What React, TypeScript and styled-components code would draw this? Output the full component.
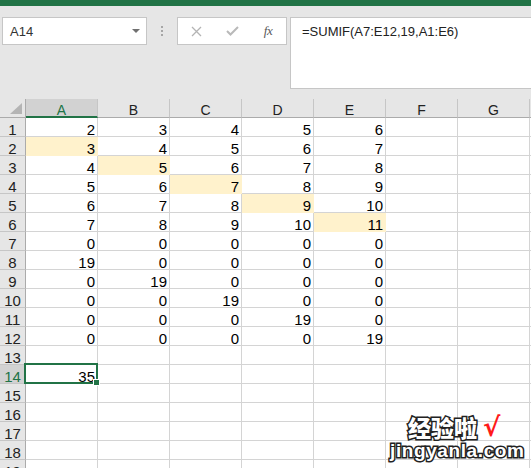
import styled, { createGlobalStyle, css } from 'styled-components';
import React from 'react';

const GlobalStyle = createGlobalStyle`
    html, body {
        margin: 0;
        padding: 0;
        background: #e6e6e6;
        overflow: hidden;
    }
`

const GREEN = '#217346';
const FILL = '#fff2cc';

const Page = styled.div`
    position: relative;
    width: 531px;
    height: 468px;
    overflow: hidden;
    background: #e6e6e6;
    font-family: "Liberation Sans", Arial, sans-serif;
`

const TopStrip = styled.div`
    height: 6px;
    background: ${GREEN};
`

const Toolbar = styled.div`
    display: flex;
    align-items: flex-start;
    height: 93px;
    box-sizing: border-box;
    padding: 11px 0 0 2px;
`

const NameBox = styled.div`
    display: flex;
    align-items: center;
    justify-content: space-between;
    width: 145px;
    height: 28px;
    box-sizing: border-box;
    padding: 0 6px 0 7px;
    background: #fff;
    border: 1px solid #c6c6c6;
    font-size: 13px;
    color: #333;
`

const DropArrow = styled.span`
    width: 0;
    height: 0;
    border-left: 4px solid transparent;
    border-right: 4px solid transparent;
    border-top: 4px solid #707070;
`

const Grip = styled.div`
    display: flex;
    flex-direction: column;
    align-items: center;
    gap: 2px;
    width: 30px;
    padding-top: 9px;

    span {
        width: 2px;
        height: 2px;
        background: #a6a6a6;
    }
`

const FnBox = styled.div`
    display: flex;
    align-items: center;
    width: 110px;
    height: 28px;
    box-sizing: border-box;
    background: #fff;
    border: 1px solid #c6c6c6;
`

const FnButton = styled.span`
    display: flex;
    align-items: center;
    justify-content: center;
    width: 36px;
    height: 100%;
`

const Fx = styled.span`
    font-family: "Liberation Serif", "Times New Roman", serif;
    font-style: italic;
    font-size: 13px;
    color: #595959;
    letter-spacing: -0.5px;
`

const FormulaBar = styled.div`
    flex: 1;
    margin-left: 3px;
    height: 72px;
    box-sizing: border-box;
    padding: 6px 0 0 11px;
    background: #fff;
    border: 1px solid #c6c6c6;
    border-right: none;
    font-size: 13px;
    color: #222;
`

const Sheet = styled.div`
    display: grid;
    grid-template-columns: 26px repeat(8, 72px);
    grid-auto-rows: 19px;
    background: #fff;
`

const Corner = styled.div`
    display: flex;
    align-items: flex-end;
    justify-content: flex-end;
    padding: 0 3px 3px 0;
    box-sizing: border-box;
    background: #e6e6e6;
    border-right: 1px solid #ababab;
    border-bottom: 1px solid #ababab;
`

const ColHead = styled.div<{ $active?: boolean }>`
    box-sizing: border-box;
    text-align: center;
    font-size: 14px;
    line-height: 22px;
    overflow: hidden;
    color: #222;
    background: #e6e6e6;
    border-right: 1px solid #c6c6c6;
    border-bottom: 1px solid #ababab;
    ${p => p.$active && css`
        background: #d2d2d2;
        color: ${GREEN};
        border-bottom: 2px solid ${GREEN};
    `}
`

const RowHead = styled.div<{ $active?: boolean }>`
    box-sizing: border-box;
    text-align: center;
    font-size: 15px;
    line-height: 24px;
    overflow: hidden;
    color: #222;
    background: #e6e6e6;
    border-right: 1px solid #ababab;
    border-bottom: 1px solid #c6c6c6;
    ${p => p.$active && css`
        background: #d2d2d2;
        color: ${GREEN};
    `}
`

const Cell = styled.div<{ $fill?: boolean; $selected?: boolean }>`
    position: relative;
    box-sizing: border-box;
    text-align: right;
    padding-right: 2px;
    font-size: 15px;
    line-height: 24px;
    color: #000;
    background: ${p => (p.$fill ? FILL : '#fff')};
    border-right: 1px solid ${p => (p.$fill ? FILL : '#d4d4d4')};
    border-bottom: 1px solid ${p => (p.$fill ? FILL : '#d4d4d4')};
    ${p => p.$selected && css`
        overflow: visible;
        &::after {
            content: '';
            position: absolute;
            left: -2px;
            top: -2px;
            right: -1px;
            bottom: -1px;
            border: 2px solid ${GREEN};
            pointer-events: none;
        }
        &::before {
            content: '';
            position: absolute;
            right: -3px;
            bottom: -3px;
            width: 5px;
            height: 5px;
            background: ${GREEN};
            border: 1px solid #fff;
            z-index: 2;
        }
    `}
`

const Watermark = styled.div`
    position: absolute;
    left: 390px;
    top: 414px;
    display: flex;
    flex-direction: column;
    align-items: flex-start;
    pointer-events: none;
`

const WatermarkTitle = styled.div`
    display: flex;
    align-items: center;
    gap: 6px;
    padding-left: 18px;
    font-family: "Noto Sans CJK SC", sans-serif;
    font-weight: 900;
    font-size: 23px;
    line-height: 27px;
    color: #fff;
    -webkit-text-stroke: 3px #222;
    paint-order: stroke fill;
`

const Tick = styled.span`
    font-family: "DejaVu Sans", sans-serif;
    font-size: 26px;
    font-weight: 700;
    color: #ff1a1a;
    -webkit-text-stroke: 0;
`

const WatermarkUrl = styled.div`
    font-family: "Liberation Sans", Arial, sans-serif;
    font-weight: 700;
    font-size: 19px;
    line-height: 20px;
    letter-spacing: 0.6px;
    color: #fff;
    -webkit-text-stroke: 3px #222;
    paint-order: stroke fill;
`

const columns = ['A', 'B', 'C', 'D', 'E', 'F', 'G', ''];

const data: (number | null)[][] = [
    [2, 3, 4, 5, 6],
    [3, 4, 5, 6, 7],
    [4, 5, 6, 7, 8],
    [5, 6, 7, 8, 9],
    [6, 7, 8, 9, 10],
    [7, 8, 9, 10, 11],
    [0, 0, 0, 0, 0],
    [19, 0, 0, 0, 0],
    [0, 19, 0, 0, 0],
    [0, 0, 19, 0, 0],
    [0, 0, 0, 19, 0],
    [0, 0, 0, 0, 19],
    [],
    [35],
    [],
    [],
    [],
    [],
    [],
];

const App = () => {
    return <Page>
        <GlobalStyle />
        <TopStrip />
        <Toolbar>
            <NameBox>
                <span>A14</span>
                <DropArrow />
            </NameBox>
            <Grip><span /><span /><span /></Grip>
            <FnBox>
                <FnButton>
                    <svg width="11" height="11" viewBox="0 0 11 11">
                        <path d="M1 1L10 10M10 1L1 10" stroke="#b4b4b4" strokeWidth="1.3" />
                    </svg>
                </FnButton>
                <FnButton>
                    <svg width="13" height="10" viewBox="0 0 13 10">
                        <path d="M1 5L4.5 8.5L12 1" stroke="#b9b9b9" strokeWidth="2" fill="none" />
                    </svg>
                </FnButton>
                <FnButton><Fx>fx</Fx></FnButton>
            </FnBox>
            <FormulaBar>=SUMIF(A7:E12,19,A1:E6)</FormulaBar>
        </Toolbar>
        <Sheet>
            <Corner>
                <svg width="12" height="11" viewBox="0 0 12 11">
                    <polygon points="12,0 12,11 0,11" fill="#b4b4b4" />
                </svg>
            </Corner>
            {columns.map((c, ci) => <ColHead key={ci} $active={c === 'A'}>{c}</ColHead>)}
            {data.map((row, r) => (
                <React.Fragment key={r}>
                    <RowHead $active={r === 13}>{r + 1}</RowHead>
                    {columns.map((c, ci) => (
                        <Cell
                            key={ci}
                            $fill={r < 6 && r - 1 === ci}
                            $selected={r === 13 && ci === 0}
                        >
                            {row[ci] ?? ''}
                        </Cell>
                    ))}
                </React.Fragment>
            ))}
        </Sheet>
        <Watermark>
            <WatermarkTitle>经验啦<Tick>√</Tick></WatermarkTitle>
            <WatermarkUrl>jingyanla.com</WatermarkUrl>
        </Watermark>
    </Page>;
}

export default App
